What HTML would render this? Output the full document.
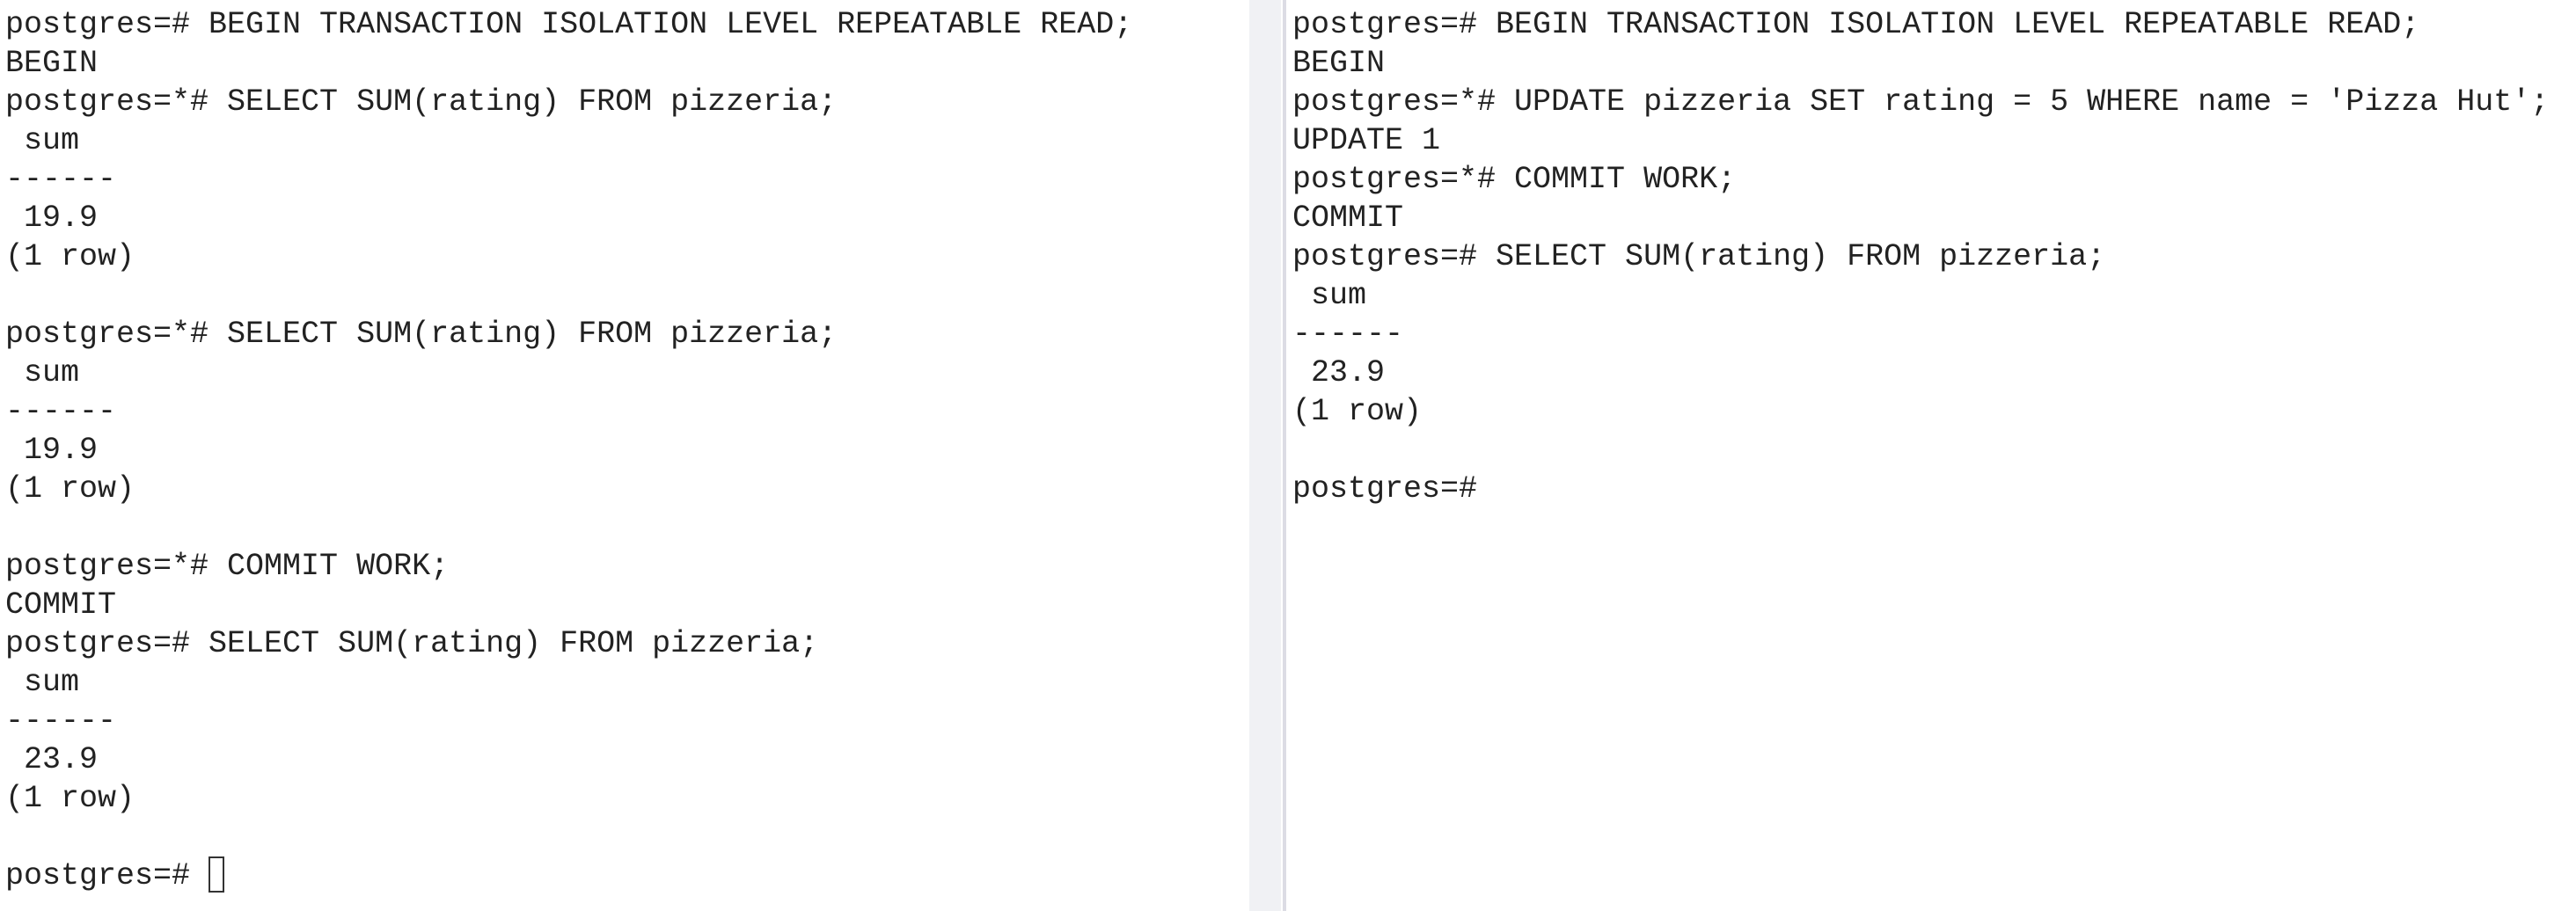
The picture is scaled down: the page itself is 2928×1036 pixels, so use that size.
<!DOCTYPE html>
<html><head><meta charset="utf-8"><style>
html,body{margin:0;padding:0;background:#fff;width:2928px;height:1036px;overflow:hidden}
pre{margin:0;font-family:"Liberation Mono","Courier New",monospace;font-size:35px;line-height:44px;color:#222;position:absolute;top:6px}
#l{left:6px}
#r{left:1469px}
.g{position:absolute;left:1420px;top:0;width:36px;height:1036px;background:#f0f1f4}
.b{position:absolute;left:1458px;top:0;width:4px;height:1036px;background:#dcdce4}
.c{display:inline-block;width:18px;height:41px;border:2px solid #333;vertical-align:-10px;box-sizing:border-box}
</style></head><body>
<div class="g"></div><div class="b"></div>
<pre id="l">postgres=# BEGIN TRANSACTION ISOLATION LEVEL REPEATABLE READ;
BEGIN
postgres=*# SELECT SUM(rating) FROM pizzeria;
 sum
------
 19.9
(1 row)

postgres=*# SELECT SUM(rating) FROM pizzeria;
 sum
------
 19.9
(1 row)

postgres=*# COMMIT WORK;
COMMIT
postgres=# SELECT SUM(rating) FROM pizzeria;
 sum
------
 23.9
(1 row)

postgres=# <span class="c"></span></pre>
<pre id="r">postgres=# BEGIN TRANSACTION ISOLATION LEVEL REPEATABLE READ;
BEGIN
postgres=*# UPDATE pizzeria SET rating = 5 WHERE name = 'Pizza Hut';
UPDATE 1
postgres=*# COMMIT WORK;
COMMIT
postgres=# SELECT SUM(rating) FROM pizzeria;
 sum
------
 23.9
(1 row)

postgres=#</pre>
</body></html>
